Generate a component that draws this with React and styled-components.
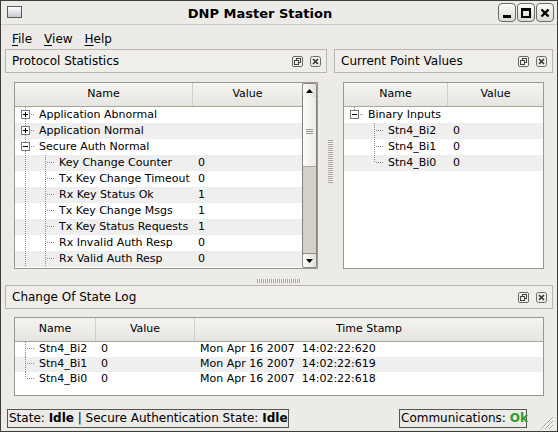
import React from 'react';
import styled, { createGlobalStyle } from 'styled-components';

const GlobalStyle = createGlobalStyle`
  html, body { margin: 0; padding: 0; background: #edebe7; }
  body { font-family: "DejaVu Sans", "Noto Sans", sans-serif; color: #000; }
  * { box-sizing: border-box; }
`;

const Window = styled.div`
  width: 558px;
  height: 432px;
  border: 1px solid #3e3d3a;
  background: #edebe7;
  display: flex;
  flex-direction: column;
  overflow: hidden;
`;

const TitleBar = styled.div`
  height: 24px;
  flex: none;
  display: flex;
  align-items: center;
  border-bottom: 1px solid #cfcbc3;
`;

const WindowIcon = styled.div`
  width: 15px;
  height: 12px;
  margin-left: 6px;
  margin-top: -2px;
  border: 1px solid #5c5b58;
  background: linear-gradient(#ffffff, #c8c8d0);
`;

const Title = styled.div`
  flex: 1;
  text-align: center;
  font-size: 13px;
  font-weight: bold;
  padding-top: 1px;
`;

const WinButtons = styled.div`
  display: flex;
  gap: 1px;
  margin-right: 3px;
`;

const WinButton = styled.div`
  width: 18px;
  height: 19px;
  border: 1px solid #6d6b66;
  border-radius: 4px;
  background: linear-gradient(#fbfbfa, #dcdad5);
  display: flex;
  align-items: center;
  justify-content: center;
`;

const MenuBar = styled.div`
  height: 24px;
  flex: none;
  display: flex;
  align-items: center;
  padding: 3px 0 0 5px;
`;

const MenuItem = styled.span`
  padding: 0 6px;
  font-size: 12px;
  u { text-decoration: underline; text-underline-offset: 2px; }
`;

const Content = styled.div`
  flex: 1;
  display: flex;
  flex-direction: column;
  padding: 0 4px;
`;

const TopRow = styled.div`
  height: 224px;
  flex: none;
  display: flex;
`;

const Dock = styled.div`
  width: ${(p) => p.$w}px;
  height: ${(p) => p.$h || 224}px;
  flex: none;
  display: flex;
  flex-direction: column;
`;

const DockTitle = styled.div`
  height: 24px;
  flex: none;
  display: flex;
  align-items: center;
  justify-content: space-between;
  padding: 0 5px 0 6px;
  border: 1px solid #bab6af;
  background: #efeeea;
  font-size: 12px;
`;

const DockIcons = styled.div`
  display: flex;
  gap: 7px;
  align-items: center;
`;

const DockBody = styled.div`
  flex: 1;
  display: flex;
  padding: ${(p) => p.$pad || '9px 9px 4px 9px'};
  min-height: 0;
`;

const VSplit = styled.div`
  width: 7px;
  flex: none;
  display: flex;
  align-items: center;
  justify-content: center;
`;

const VGrip = styled.div`
  width: 5px;
  height: 43px;
  background: repeating-linear-gradient(to bottom, #a7a49d 0 1px, #f7f6f3 1px 2px);
`;

const HSplit = styled.div`
  height: 12px;
  flex: none;
  display: flex;
  align-items: flex-end;
  justify-content: center;
  padding-bottom: 2px;
`;

const HGrip = styled.div`
  width: 44px;
  height: 4px;
  background: repeating-linear-gradient(to right, #a7a49d 0 1px, #f7f6f3 1px 2px);
`;

const TreeFrame = styled.div`
  flex: 1;
  display: flex;
  background: #fff;
  border: 1px solid #9a978f;
  min-width: 0;
`;

const TreeMain = styled.div`
  flex: 1;
  display: flex;
  flex-direction: column;
  min-width: 0;
  overflow: hidden;
`;

const Header = styled.div`
  height: 24px;
  flex: none;
  display: flex;
  border-bottom: 1px solid #a8a59e;
  background: linear-gradient(#f5f4f1, #e7e5e0);
`;

const HeadCell = styled.div`
  width: ${(p) => (p.$w ? `${p.$w}px` : 'auto')};
  flex: ${(p) => (p.$w ? 'none' : '1')};
  text-align: center;
  font-size: 11px;
  line-height: 22px;
  border-right: ${(p) => (p.$w ? '1px solid #d2cfc8' : 'none')};
`;

const Row = styled.div`
  height: ${(p) => p.$h}px;
  flex: none;
  display: flex;
  background: ${(p) => (p.$alt ? '#efefef' : '#ffffff')};
`;

const Cell = styled.div`
  width: ${(p) => (p.$w ? `${p.$w}px` : 'auto')};
  flex: ${(p) => (p.$w ? 'none' : '1')};
  display: flex;
  align-items: center;
  font-size: 11px;
  white-space: pre;
  overflow: hidden;
  padding-left: ${(p) => (p.$value ? 5 : 0)}px;
`;

const CellText = styled.span`
  margin-left: ${(p) => (p.$name ? 4 : 0)}px;
  padding-bottom: 2px;
`;

const BranchSvg = styled.svg`
  display: block;
  flex: none;
`;

const ScrollBar = styled.div`
  width: 15px;
  flex: none;
  display: flex;
  flex-direction: column;
  background: #d5d1c9;
  border: 1px solid #85827c;
  border-radius: 2px;
`;

const ScrollBtn = styled.div`
  height: 15px;
  flex: none;
  display: flex;
  align-items: center;
  justify-content: center;
  background: linear-gradient(90deg, #fbfbfa, #e3e1dc);
  border-radius: 2px;
  border: 1px solid #8f8c86;
  margin: -1px;
`;

const Thumb = styled.div`
  height: 70px;
  flex: none;
  display: flex;
  align-items: center;
  justify-content: center;
  background: linear-gradient(90deg, #fbfbfa, #eceae6);
  border-bottom: 1px solid #a9a69f;
`;

const StatusBar = styled.div`
  height: 32px;
  flex: none;
  display: flex;
  align-items: flex-start;
  padding: 10px 3px 0 6px;
`;

const StatusLabel = styled.div`
  width: ${(p) => p.$w}px;
  height: 19px;
  border: 1px solid #57554f;
  padding: 0 0 0 1px;
  font-size: 12px;
  line-height: 17px;
  white-space: nowrap;
  b { font-weight: bold; }
`;

const Ok = styled.b`
  color: #2f9a35;
`;

const Spacer = styled.div`
  flex: 1;
`;

const SizeGrip = styled.svg`
  margin-left: 7px;
  margin-top: 4px;
  display: block;
`;

const Branch = ({ kind, box, h }) => {
  const m = Math.floor(h / 2) - 1;
  const c = '#8a8a8a';
  return (
    <BranchSvg width="20" height={h} shapeRendering="crispEdges">
      {(kind === 'mid' || kind === 'pass') && (
        <line x1="10.5" y1="0" x2="10.5" y2={h} stroke={c} strokeDasharray="1 1" />
      )}
      {kind === 'last' && <line x1="10.5" y1="0" x2="10.5" y2={m} stroke={c} strokeDasharray="1 1" />}
      {(kind === 'mid' || kind === 'last') && (
        <line x1="12" y1={m + 0.5} x2="20" y2={m + 0.5} stroke={c} strokeDasharray="1 1" />
      )}
      {box && (
        <g>
          <rect x="6.5" y={m - 3.5} width="8" height="8" fill="#fff" stroke="#7b7b7b" />
          <line x1="8" y1={m + 0.5} x2="13" y2={m + 0.5} stroke="#000" />
          {box === 'plus' && <line x1="10.5" y1={m - 2} x2="10.5" y2={m + 3} stroke="#000" />}
        </g>
      )}
    </BranchSvg>
  );
};

const Arrow = ({ up }) => (
  <svg width="7" height="4">
    <polygon points={up ? '0,4 7,4 3.5,0' : '0,0 7,0 3.5,4'} fill="#000" />
  </svg>
);

const FloatIcon = () => (
  <svg width="11" height="11" shapeRendering="crispEdges">
    <rect x="0.5" y="0.5" width="10" height="10" rx="2" fill="none" stroke="#6a6a6a" />
    <rect x="2.5" y="4.5" width="4" height="4" fill="none" stroke="#444" />
    <polyline points="4.5,4 4.5,2.5 8.5,2.5 8.5,6.5 7,6.5" fill="none" stroke="#444" />
  </svg>
);

const CloseIcon = () => (
  <svg width="11" height="11">
    <rect x="0.5" y="0.5" width="10" height="10" rx="2" fill="none" stroke="#6a6a6a" />
    <path d="M3 3 L8 8 M8 3 L3 8" stroke="#333" strokeWidth="1.6" />
  </svg>
);

const DockHead = ({ title }) => (
  <DockTitle>
    <span>{title}</span>
    <DockIcons>
      <FloatIcon />
      <CloseIcon />
    </DockIcons>
  </DockTitle>
);

const Tree = ({ columns, rows, rowH, scroll }) => (
  <TreeFrame>
    <TreeMain>
      <Header>
        {columns.map((c) => (
          <HeadCell key={c.label} $w={c.w}>
            {c.label}
          </HeadCell>
        ))}
      </Header>
      {rows.map((r, i) => (
        <Row key={i} $h={rowH} $alt={i % 2 === 1}>
          <Cell $w={columns[0].w}>
            {r.branches.map((b, j) => (
              <Branch key={j} kind={b.kind} box={b.box} h={rowH} />
            ))}
            <CellText $name>{r.cells[0]}</CellText>
          </Cell>
          {r.cells.slice(1).map((v, j) => (
            <Cell key={j} $w={columns[j + 1].w} $value>
              <CellText>{v}</CellText>
            </Cell>
          ))}
        </Row>
      ))}
    </TreeMain>
    {scroll && (
      <ScrollBar>
        <ScrollBtn>
          <Arrow up />
        </ScrollBtn>
        <Thumb>
          <svg width="7" height="5">
            <path d="M0 0.5 H7 M0 2.5 H7 M0 4.5 H7" stroke="#9c9992" />
          </svg>
        </Thumb>
        <Spacer />
        <ScrollBtn>
          <Arrow />
        </ScrollBtn>
      </ScrollBar>
    )}
  </TreeFrame>
);

const child = [{ kind: 'pass' }, { kind: 'mid' }];

const protoRows = [
  { cells: ['Application Abnormal', ''], branches: [{ kind: 'mid', box: 'plus' }] },
  { cells: ['Application Normal', ''], branches: [{ kind: 'mid', box: 'plus' }] },
  { cells: ['Secure Auth Normal', ''], branches: [{ kind: 'mid', box: 'minus' }] },
  { cells: ['Key Change Counter', '0'], branches: child },
  { cells: ['Tx Key Change Timeout', '0'], branches: child },
  { cells: ['Rx Key Status Ok', '1'], branches: child },
  { cells: ['Tx Key Change Msgs', '1'], branches: child },
  { cells: ['Tx Key Status Requests', '1'], branches: child },
  { cells: ['Rx Invalid Auth Resp', '0'], branches: child },
  { cells: ['Rx Valid Auth Resp', '0'], branches: child },
];

const pointRows = [
  { cells: ['Binary Inputs', ''], branches: [{ kind: 'last', box: 'minus' }] },
  { cells: ['Stn4_Bi2', '0'], branches: [{ kind: 'empty' }, { kind: 'mid' }] },
  { cells: ['Stn4_Bi1', '0'], branches: [{ kind: 'empty' }, { kind: 'mid' }] },
  { cells: ['Stn4_Bi0', '0'], branches: [{ kind: 'empty' }, { kind: 'last' }] },
];

const logRows = [
  { cells: ['Stn4_Bi2', '0', 'Mon Apr 16 2007  14:02:22:620'], branches: [{ kind: 'mid' }] },
  { cells: ['Stn4_Bi1', '0', 'Mon Apr 16 2007  14:02:22:619'], branches: [{ kind: 'mid' }] },
  { cells: ['Stn4_Bi0', '0', 'Mon Apr 16 2007  14:02:22:618'], branches: [{ kind: 'last' }] },
];

export default function App() {
  return (
    <>
      <GlobalStyle />
      <Window>
        <TitleBar>
          <WindowIcon />
          <Title>DNP Master Station</Title>
          <WinButtons>
            <WinButton>
              <svg width="8" height="10">
                <rect x="0" y="7" width="8" height="3" fill="#000" />
              </svg>
            </WinButton>
            <WinButton>
              <svg width="10" height="10" shapeRendering="crispEdges">
                <rect x="1" y="1" width="8" height="8" fill="none" stroke="#000" strokeWidth="1.5" />
                <rect x="1" y="1" width="8" height="2" fill="#000" />
              </svg>
            </WinButton>
            <WinButton>
              <svg width="10" height="10">
                <path d="M1.5 1.5 L8.5 8.5 M8.5 1.5 L1.5 8.5" stroke="#000" strokeWidth="2.4" />
              </svg>
            </WinButton>
          </WinButtons>
        </TitleBar>
        <MenuBar>
          <MenuItem>
            <u>F</u>ile
          </MenuItem>
          <MenuItem>
            <u>V</u>iew
          </MenuItem>
          <MenuItem>
            <u>H</u>elp
          </MenuItem>
        </MenuBar>
        <Content>
          <TopRow>
            <Dock $w={322}>
              <DockHead title="Protocol Statistics" />
              <DockBody>
                <Tree
                  rowH={16}
                  scroll
                  columns={[{ label: 'Name', w: 178 }, { label: 'Value' }]}
                  rows={protoRows}
                />
              </DockBody>
            </Dock>
            <VSplit>
              <VGrip />
            </VSplit>
            <Dock $w={219}>
              <DockHead title="Current Point Values" />
              <DockBody>
                <Tree rowH={16} columns={[{ label: 'Name', w: 104 }, { label: 'Value' }]} rows={pointRows} />
              </DockBody>
            </Dock>
          </TopRow>
          <HSplit>
            <HGrip />
          </HSplit>
          <Dock $w={548} $h={114}>
            <DockHead title="Change Of State Log" />
            <DockBody $pad="8px 9px 3px 9px">
              <Tree
                rowH={15}
                columns={[
                  { label: 'Name', w: 81 },
                  { label: 'Value', w: 99 },
                  { label: 'Time Stamp' },
                ]}
                rows={logRows}
              />
            </DockBody>
          </Dock>
        </Content>
        <StatusBar>
          <StatusLabel $w={282}>
            State: <b>Idle</b> | Secure Authentication State: <b>Idle</b>
          </StatusLabel>
          <Spacer />
          <StatusLabel $w={128}>
            Communications: <Ok>Ok</Ok>
          </StatusLabel>
          <SizeGrip width="20" height="16">
            <path d="M19 4 L7 16 M19 8 L11 16 M19 12 L15 16" stroke="#a9a69f" />
            <path d="M19 5 L8 16 M19 9 L12 16 M19 13 L16 16" stroke="#fff" />
          </SizeGrip>
        </StatusBar>
      </Window>
    </>
  );
}
